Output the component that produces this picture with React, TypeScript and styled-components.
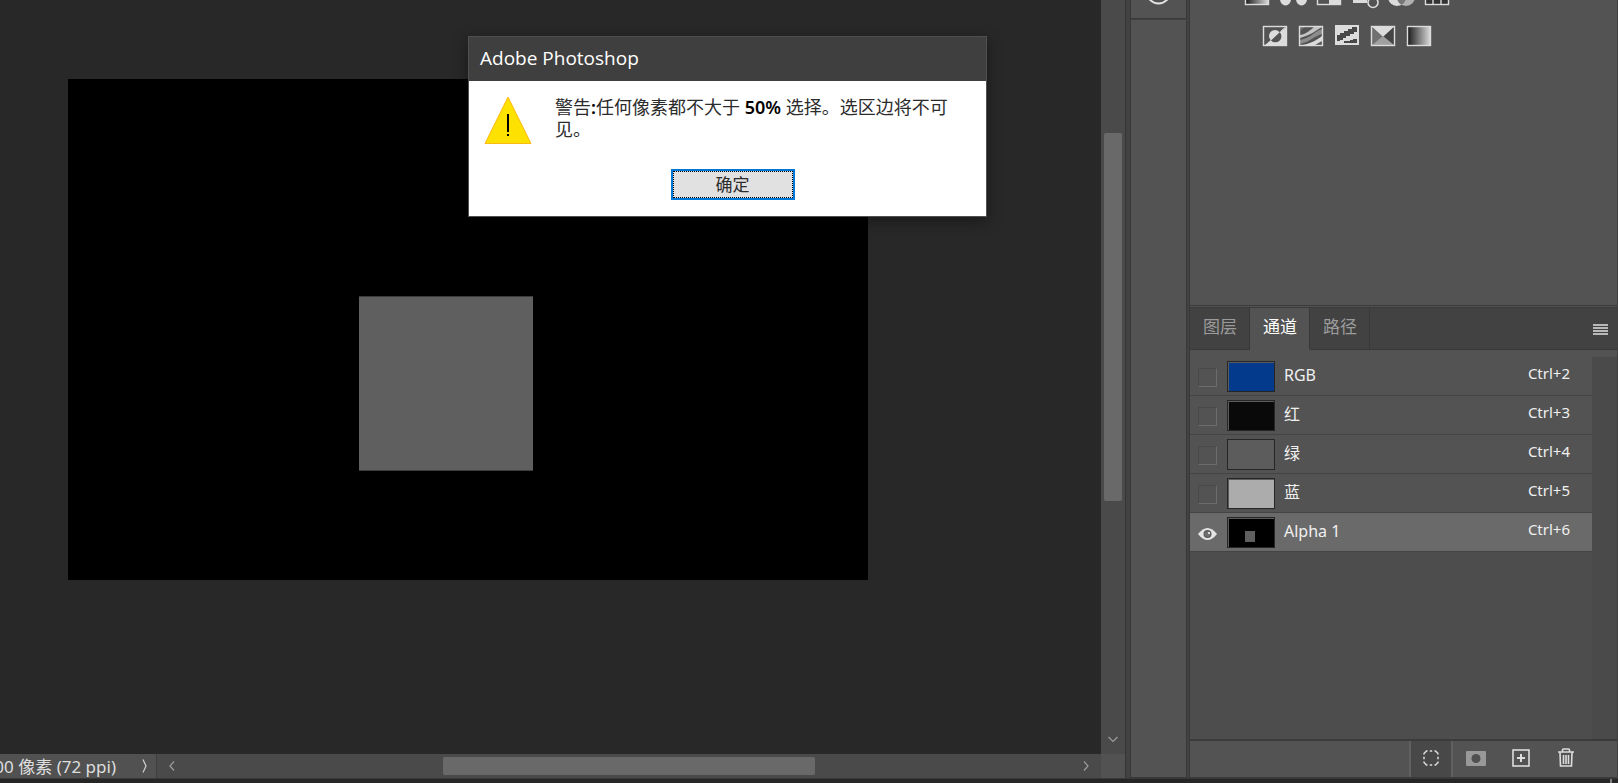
import React from "react";
import styled, { createGlobalStyle, css } from "styled-components";

const GlobalStyle = createGlobalStyle`
  * { box-sizing: border-box; }
  body {
    margin: 0;
    background: #282828;
    color: #f0f0f0;
    font-family: "Noto Sans", "Noto Sans CJK SC", sans-serif;
    overflow: hidden;
  }
  button { font: inherit; color: inherit; }
`;

const Shell = styled.div`
  display: grid;
  grid-template-rows: minmax(0, 1fr) 5px;
  height: 100vh;
  min-width: 1100px;
`;

const Main = styled.main`
  display: flex;
  min-height: 0;
`;

const DocumentColumn = styled.section`
  flex: 1;
  min-width: 0;
  display: grid;
  grid-template: minmax(0, 1fr) 24px / minmax(0, 1fr) 24px;
`;

const Pasteboard = styled.div`
  position: relative;
  background: #282828;
  overflow: hidden;
`;

const Artboard = styled.div`
  position: absolute;
  left: 68px;
  top: 79px;
  width: 800px;
  height: 501px;
  background: #000;
`;

const Selection = styled.div`
  position: absolute;
  left: 291px;
  top: 217px;
  width: 174px;
  height: 175px;
  background: #5f5f5f;
  border: solid #3c3c3c;
  border-width: 1px 0;
`;

const ScrollThumb = styled.div`
  background: #696969;
  border-radius: 2px;
`;

const ArrowButton = styled.button`
  display: flex;
  align-items: center;
  justify-content: center;
  padding: 0;
  border: 0;
  background: none;
  color: #9c9c9c;
`;

const VerticalBar = styled.div`
  display: grid;
  grid-template-rows: 133fr 368fr 224fr 29px;
  padding: 0 3px;
  background: #4a4a4a;
`;

const BottomBar = styled.div`
  display: flex;
  min-width: 0;
  background: #4a4a4a;
`;

const Status = styled.div`
  display: flex;
  align-items: center;
  justify-content: flex-end;
  width: 157px;
  border-right: 1px solid #3e3e3e;
  background: #515151;
  overflow: hidden;
  font-size: 17px;
  line-height: 24px;
  white-space: nowrap;
  color: #dedede;
`;

const StatusText = styled.span`
  flex: none;
  padding-top: 1px;
`;

const StatusArrow = styled(ArrowButton)`
  flex: none;
  width: 22px;
  height: 24px;
  margin: 0 0 0 18px;
  color: #d0d0d0;
`;

const HorizontalBar = styled.div`
  flex: 1;
  display: grid;
  grid-template-columns: 30px 256fr 372fr 256fr 30px;
  padding: 3px 0;
`;

const HorizontalThumb = styled(ScrollThumb)`
  grid-column: 3;
`;

const Corner = styled.div`
  background: #525252;
`;

const Strip = styled.aside`
  display: flex;
  flex-direction: column;
  flex: none;
  width: 65px;
  padding: 0 2px 0 4px;
  border-left: 1px solid #353535;
  border-right: 1px solid #383838;
  background: #424242;
`;

const StripCell = styled.div<{ $grow?: boolean }>`
  display: flex;
  justify-content: center;
  background: #535353;
  border: solid #383838;
  border-width: 0 1px 1px;
  ${(p) => (p.$grow ? css`flex: 1; margin-top: 1px;` : css`height: 19px;`)}
`;

const Panels = styled.aside`
  display: flex;
  flex-direction: column;
  flex: none;
  width: 428px;
  border-right: 1px solid #404040;
  background: #535353;
`;

const Adjustments = styled.section`
  display: flex;
  flex-direction: column;
  gap: 21px;
  height: 306px;
  border-bottom: 1px solid #3a3a3a;
  overflow: hidden;
`;

const IconRow = styled.div<{ $inset: number; $clipped?: boolean }>`
  display: flex;
  gap: 12px;
  height: 20px;
  flex: none;
  padding-left: ${(p) => p.$inset}px;
  margin-top: ${(p) => (p.$clipped ? -15 : 0)}px;
`;

const IconButton = styled.button`
  display: flex;
  width: 24px;
  height: 20px;
  padding: 0;
  border: 0;
  background: none;
`;

const IconArt = styled.svg`
  overflow: visible;
`;

const TabBar = styled.div`
  display: flex;
  height: 43px;
  margin-top: 1px;
  border-top: 1px solid #3a3a3a;
  background: #424242;
`;

const Tab = styled.button<{ $active?: boolean }>`
  width: 60px;
  padding: 0 0 4px 1px;
  border: solid #383838;
  border-width: 0 1px 1px 0;
  background: #424242;
  color: #9b9b9b;
  font-size: 17px;
  line-height: 24px;
  ${(p) => p.$active && css`
    background: #535353;
    border-bottom-color: #535353;
    color: #fff;
  `}
`;

const TabFill = styled.div`
  flex: 1;
  display: flex;
  justify-content: flex-end;
  align-items: center;
  padding: 2px 9px 0 0;
  border-bottom: 1px solid #383838;
`;

const MenuButton = styled.button`
  display: flex;
  padding: 0;
  border: 0;
  background: none;
`;

const ChannelArea = styled.div`
  flex: 1;
  display: flex;
  min-height: 0;
  padding-top: 7px;
`;

const ChannelList = styled.ul`
  flex: 1;
  margin: 0;
  padding: 0;
  list-style: none;
  background: #4d4d4d;
`;

const ScrollTrack = styled.div`
  width: 25px;
  background: #4a4a4a;
`;

const Channel = styled.li<{ $active?: boolean }>`
  display: flex;
  align-items: center;
  height: 39px;
  padding: 0 22px 0 8px;
  border-bottom: 1px solid #444;
  background: ${(p) => (p.$active ? "#6a6a6a" : "#535353")};
`;

const Visibility = styled.label`
  display: flex;
  align-items: center;
  width: 29px;
  height: 38px;
  padding-top: 3px;
`;

const VisibilityInput = styled.input`
  appearance: none;
  width: 19px;
  height: 19px;
  margin: 0;
  border: 1px solid;
  border-color: #494949 #6c6c6c #6c6c6c #494949;
  &:checked { display: none; }
`;

const Thumbnail = styled.div<{ $fill: string }>`
  display: flex;
  width: 48px;
  height: 31px;
  padding: 13px 0 0 17px;
  border: 1px solid #262626;
  box-shadow: inset 1px 1px #5c5c5c;
  background: ${(p) => p.$fill};
`;

const ThumbnailMark = styled.div`
  width: 10px;
  height: 11px;
  background: #5f5f5f;
`;

const ChannelName = styled.span`
  flex: 1;
  padding: 0 0 2px 9px;
  font-size: 16px;
  line-height: 24px;
`;

const Shortcut = styled.span`
  padding-bottom: 6px;
  font-size: 15px;
  line-height: 24px;
`;

const Actions = styled.div`
  display: flex;
  align-items: center;
  justify-content: flex-end;
  height: 39px;
  padding-right: 29px;
  border: solid #3b3b3b;
  border-width: 2px 0 1px;
`;

const ActionButton = styled.button<{ $active?: boolean }>`
  display: flex;
  align-items: center;
  justify-content: center;
  width: 45px;
  height: 36px;
  padding: 0 0 2px;
  border: 0;
  background: none;
  ${(p) => p.$active && css`
    width: 44px;
    border: solid #606060;
    border-width: 0 2px;
    background: #484848;
  `}
`;

const Footer = styled.footer`
  display: flex;
  justify-content: flex-end;
  padding-right: 6px;
  border-top: 1px solid #383838;
  background: #262626;
`;

const FooterMark = styled.div`
  width: 2px;
  background: #808080;
`;

const Dialog = styled.div`
  position: absolute;
  left: 468px;
  top: 36px;
  width: 519px;
  border: 1px solid #505050;
  background: #fff;
  color: #000;
  box-shadow: 0 4px 14px rgba(0, 0, 0, 0.4);
`;

const DialogTitle = styled.h1`
  margin: 0;
  padding: 0 11px 2px;
  background: #3f3f3f;
  color: #fff;
  font-size: 19px;
  font-weight: 400;
  line-height: 42px;
  font-family: "Open Sans", sans-serif;
`;

const DialogBody = styled.div`
  display: flex;
  gap: 20px;
  padding: 14px 20px 0 15px;
`;

const Message = styled.p`
  flex: 1;
  margin: 0;
  padding: 1px 0 0 3px;
  color: #2c2c2c;
  font-size: 18px;
  line-height: 22px;
  white-space: nowrap;
`;

const Strong = styled.b`
  color: #000;
  font-weight: 600;
`;

const DialogActions = styled.div`
  display: flex;
  justify-content: center;
  padding: 24px 0 16px 10px;
`;

const OkButton = styled.button`
  width: 124px;
  height: 31px;
  padding: 0;
  border: 2px solid #0078d7;
  outline: 1px dotted #000;
  outline-offset: -3px;
  background: #e1e1e1;
  color: #2c2c2c;
  font-size: 17px;
  line-height: 22px;
`;

const ink = "#dcdcdc";

const Chevron = ({ d, w = 10, h = 10 }: { d: string; w?: number; h?: number }) => (
  <svg width={w} height={h} viewBox={`0 0 ${w} ${h}`} fill="none" stroke="currentColor" strokeWidth="1.2" aria-hidden="true">
    <path d={d} />
  </svg>
);

const Glyph = ({ children }: { children: React.ReactNode }) => (
  <IconArt width="24" height="20" viewBox="0 0 24 20" aria-hidden="true">{children}</IconArt>
);

const Frame = () => <rect x="0.5" y="0.5" width="23" height="19" fill="none" stroke={ink} strokeWidth="1.4" />;

const topIcons: [string, React.ReactNode][] = [
  ["色相/饱和度", <>
    <defs>
      <linearGradient id="ramp">
        <stop offset="0.05" stopColor="#202020" />
        <stop offset="0.95" stopColor="#d6d6d6" />
      </linearGradient>
    </defs>
    <rect width="24" height="20" fill="url(#ramp)" />
    <Frame />
  </>],
  ["色彩平衡", <g fill={ink}><path d="M4 1h16v2H4z" /><ellipse cx="4.5" cy="14" rx="5.5" ry="6.5" /><ellipse cx="20.5" cy="14" rx="5.5" ry="6.5" /></g>],
  ["黑白", <><path d="M12 1h11v18H12z" fill={ink} /><Frame /></>],
  ["照片滤镜", <><path d="M0 4h14v14H0z" fill={ink} /><circle cx="20" cy="17.5" r="5" fill="#535353" stroke={ink} strokeWidth="1.6" /></>],
  ["通道混合器", <><circle cx="8" cy="12" r="9" fill={ink} /><circle cx="17" cy="12" r="9" fill="#b0b0b0" /><path d="M12.5 4.2a9 9 0 0 1 0 15.6 9 9 0 0 1 0-15.6" fill="#777" /></>],
  ["颜色查找", <><rect width="24" height="20" fill="#333" /><Frame /><path d="M8 1v18M16 1v18M1 7h22M1 13h22" stroke={ink} strokeWidth="1.4" /></>],
];

const bottomIcons: [string, React.ReactNode][] = [
  ["反相", <>
    <path d="M23 1v18H2z" fill={ink} />
    <circle cx="12" cy="10" r="6" fill={ink} />
    <path d="M16.8 6.2a6 6 0 0 1-8.8 8.2z" fill="#535353" />
    <path d="M17.5 5.5 22 1.5" stroke={ink} />
    <Frame />
  </>],
  ["色调分离", <>
    <path d="M1 1h5L1 5z" fill="#707070" />
    <path d="M1 9C8 8 11 4 15 1h8C16 5 12 9 1 12z" fill="#c4c4c4" />
    <path d="M1 14C12 12 14 6 23 3v5C15 10 11 16 1 18z" fill="#8c8c8c" />
    <path d="M4 19C13 17 18 14 23 10v5L16 19z" fill={ink} />
    <Frame />
  </>],
  ["阈值", <>
    <rect y="-1" width="24" height="20" fill={ink} />
    <path d="M2 9h3V7h4V5h4V3h4V1h5v5h-3v2h-4v2h-4v2H8v2H5v1H2zM9 17v-2h6v-1h3v-1h4v4z" fill="#484848" />
  </>],
  ["可选颜色", <>
    <path d="M1 1h22L12 11z" fill={ink} />
    <path d="M1 1 12 11 1 19z" fill="#707070" />
    <path d="M23 1 12 11l11 8z" fill="#444" />
    <path d="M1 19 12 10l11 9z" fill="#a0a0a0" />
    <Frame />
  </>],
  ["渐变映射", <><rect width="24" height="20" fill="url(#ramp)" /><Frame /></>],
];

const channels = [
  { name: "RGB", key: "Ctrl+2", fill: "#043a8c" },
  { name: "红", key: "Ctrl+3", fill: "#090909" },
  { name: "绿", key: "Ctrl+4", fill: "#5c5c5c" },
  { name: "蓝", key: "Ctrl+5", fill: "#acacac" },
  { name: "Alpha 1", key: "Ctrl+6", fill: "#000", active: true },
];

const EyeIcon = () => (
  <svg width="19" height="14" viewBox="0 0 19 14" aria-hidden="true">
    <path d="M0 7Q9.5-5 19 7Q9.5 19 0 7z" fill="#e4e4e4" />
    <circle cx="9.5" cy="7" r="4" fill="#5a5a5a" />
    <circle cx="9.5" cy="7" r="2.8" fill="#707070" />
    <circle cx="11" cy="6" r="1" fill="#fff" />
  </svg>
);

export default function App() {
  return (
    <>
      <GlobalStyle />
      <Shell>
        <Main>
          <DocumentColumn>
            <Pasteboard>
              <Artboard><Selection /></Artboard>
            </Pasteboard>
            <VerticalBar>
              <span />
              <ScrollThumb />
              <span />
              <ArrowButton aria-label="向下滚动"><Chevron d="M0.5 1 5 5.5 9.5 1" h={7} /></ArrowButton>
            </VerticalBar>
            <BottomBar>
              <Status>
                <StatusText>00 像素 (72 ppi)</StatusText>
                <StatusArrow aria-label="状态选项"><Chevron d="M1 0.5 4 7 1 13.5" w={6} h={14} /></StatusArrow>
              </Status>
              <HorizontalBar>
                <ArrowButton aria-label="向左滚动"><Chevron d="M5 0.5 1 5 5 9.5" w={6} /></ArrowButton>
                <HorizontalThumb />
                <span />
                <ArrowButton aria-label="向右滚动"><Chevron d="M1 0.5 5 5 1 9.5" w={6} /></ArrowButton>
              </HorizontalBar>
            </BottomBar>
            <Corner />
          </DocumentColumn>

          <Strip>
            <StripCell>
              <svg width="28" height="5" viewBox="0 0 28 5" aria-hidden="true">
                <circle cx="13.5" cy="-8" r="11.5" fill="none" stroke="#e4e4e4" strokeWidth="2" />
              </svg>
            </StripCell>
            <StripCell $grow />
          </Strip>

          <Panels>
            <Adjustments>
              <IconRow $inset={55} $clipped>
                {topIcons.map(([name, art]) => (
                  <IconButton key={name} aria-label={name}><Glyph>{art}</Glyph></IconButton>
                ))}
              </IconRow>
              <IconRow $inset={73}>
                {bottomIcons.map(([name, art]) => (
                  <IconButton key={name} aria-label={name}><Glyph>{art}</Glyph></IconButton>
                ))}
              </IconRow>
            </Adjustments>

            <TabBar role="tablist">
              <Tab role="tab" aria-selected={false}>图层</Tab>
              <Tab role="tab" aria-selected $active>通道</Tab>
              <Tab role="tab" aria-selected={false}>路径</Tab>
              <TabFill>
                <MenuButton aria-label="面板菜单">
                  <svg width="15" height="11" viewBox="0 0 15 11" fill="#b8b8b8" aria-hidden="true">
                    <path d="M0 0h15v2H0zM0 3h15v2H0zM0 6h15v2H0zM0 9h15v2H0z" />
                  </svg>
                </MenuButton>
              </TabFill>
            </TabBar>

            <ChannelArea>
              <ChannelList>
                {channels.map((c) => (
                  <Channel key={c.name} $active={c.active}>
                    <Visibility>
                      <VisibilityInput type="checkbox" defaultChecked={c.active} aria-label={c.name} />
                      {c.active && <EyeIcon />}
                    </Visibility>
                    <Thumbnail $fill={c.fill}>{c.active && <ThumbnailMark />}</Thumbnail>
                    <ChannelName>{c.name}</ChannelName>
                    <Shortcut>{c.key}</Shortcut>
                  </Channel>
                ))}
              </ChannelList>
              <ScrollTrack />
            </ChannelArea>

            <Actions>
              <ActionButton $active aria-label="将通道作为选区载入">
                <svg width="16" height="16" viewBox="0 0 16 16" fill="none" stroke={ink} strokeWidth="1.5" aria-hidden="true">
                  <path d="M1 4.5V3.5L3.5 1h1M6.8 1h2.4M11.5 1h1L15 3.5v1M15 6.8v2.4M15 11.5v1L12.5 15h-1M9.2 15H6.8M4.5 15h-1L1 12.5v-1M1 9.2V6.8" />
                </svg>
              </ActionButton>
              <ActionButton aria-label="将选区存储为通道">
                <svg width="20" height="15" viewBox="0 0 20 15" aria-hidden="true">
                  <rect width="20" height="15" rx="1" fill="#999" />
                  <circle cx="10" cy="7.5" r="4.5" fill="#505050" />
                </svg>
              </ActionButton>
              <ActionButton aria-label="创建新通道">
                <svg width="18" height="18" viewBox="0 0 18 18" fill="none" stroke={ink} strokeWidth="1.6" aria-hidden="true">
                  <rect x="1" y="1" width="16" height="16" />
                  <path d="M9 5v8M5 9h8" strokeWidth="2" />
                </svg>
              </ActionButton>
              <ActionButton aria-label="删除当前通道">
                <svg width="18" height="20" viewBox="0 0 18 20" fill="none" stroke={ink} strokeWidth="1.6" aria-hidden="true">
                  <path d="M1 4h16M5.5 4V2q0-1 1-1h5q1 0 1 1v2M3 4.5 3.5 18h11L15 4.5M6.5 7v9M9 7v9M11.5 7v9" />
                </svg>
              </ActionButton>
            </Actions>
          </Panels>
        </Main>
        <Footer><FooterMark /></Footer>
      </Shell>

      <Dialog role="alertdialog" aria-labelledby="dialog-title" aria-describedby="dialog-message">
        <DialogTitle id="dialog-title">Adobe Photoshop</DialogTitle>
        <DialogBody>
          <svg width="48" height="50" viewBox="0 0 48 50" aria-hidden="true">
            <path d="M24 2 1 48.5h46z" fill="#fde100" stroke="#fdb913" />
            <path d="M23 19h2v18h-2zM23 39h2v2h-2z" fill="#000" />
          </svg>
          <Message id="dialog-message">
            警告<Strong>:</Strong>任何像素都不大于<Strong> 50% </Strong>选择。选区边将不可<br />见。
          </Message>
        </DialogBody>
        <DialogActions><OkButton>确定</OkButton></DialogActions>
      </Dialog>
    </>
  );
}
